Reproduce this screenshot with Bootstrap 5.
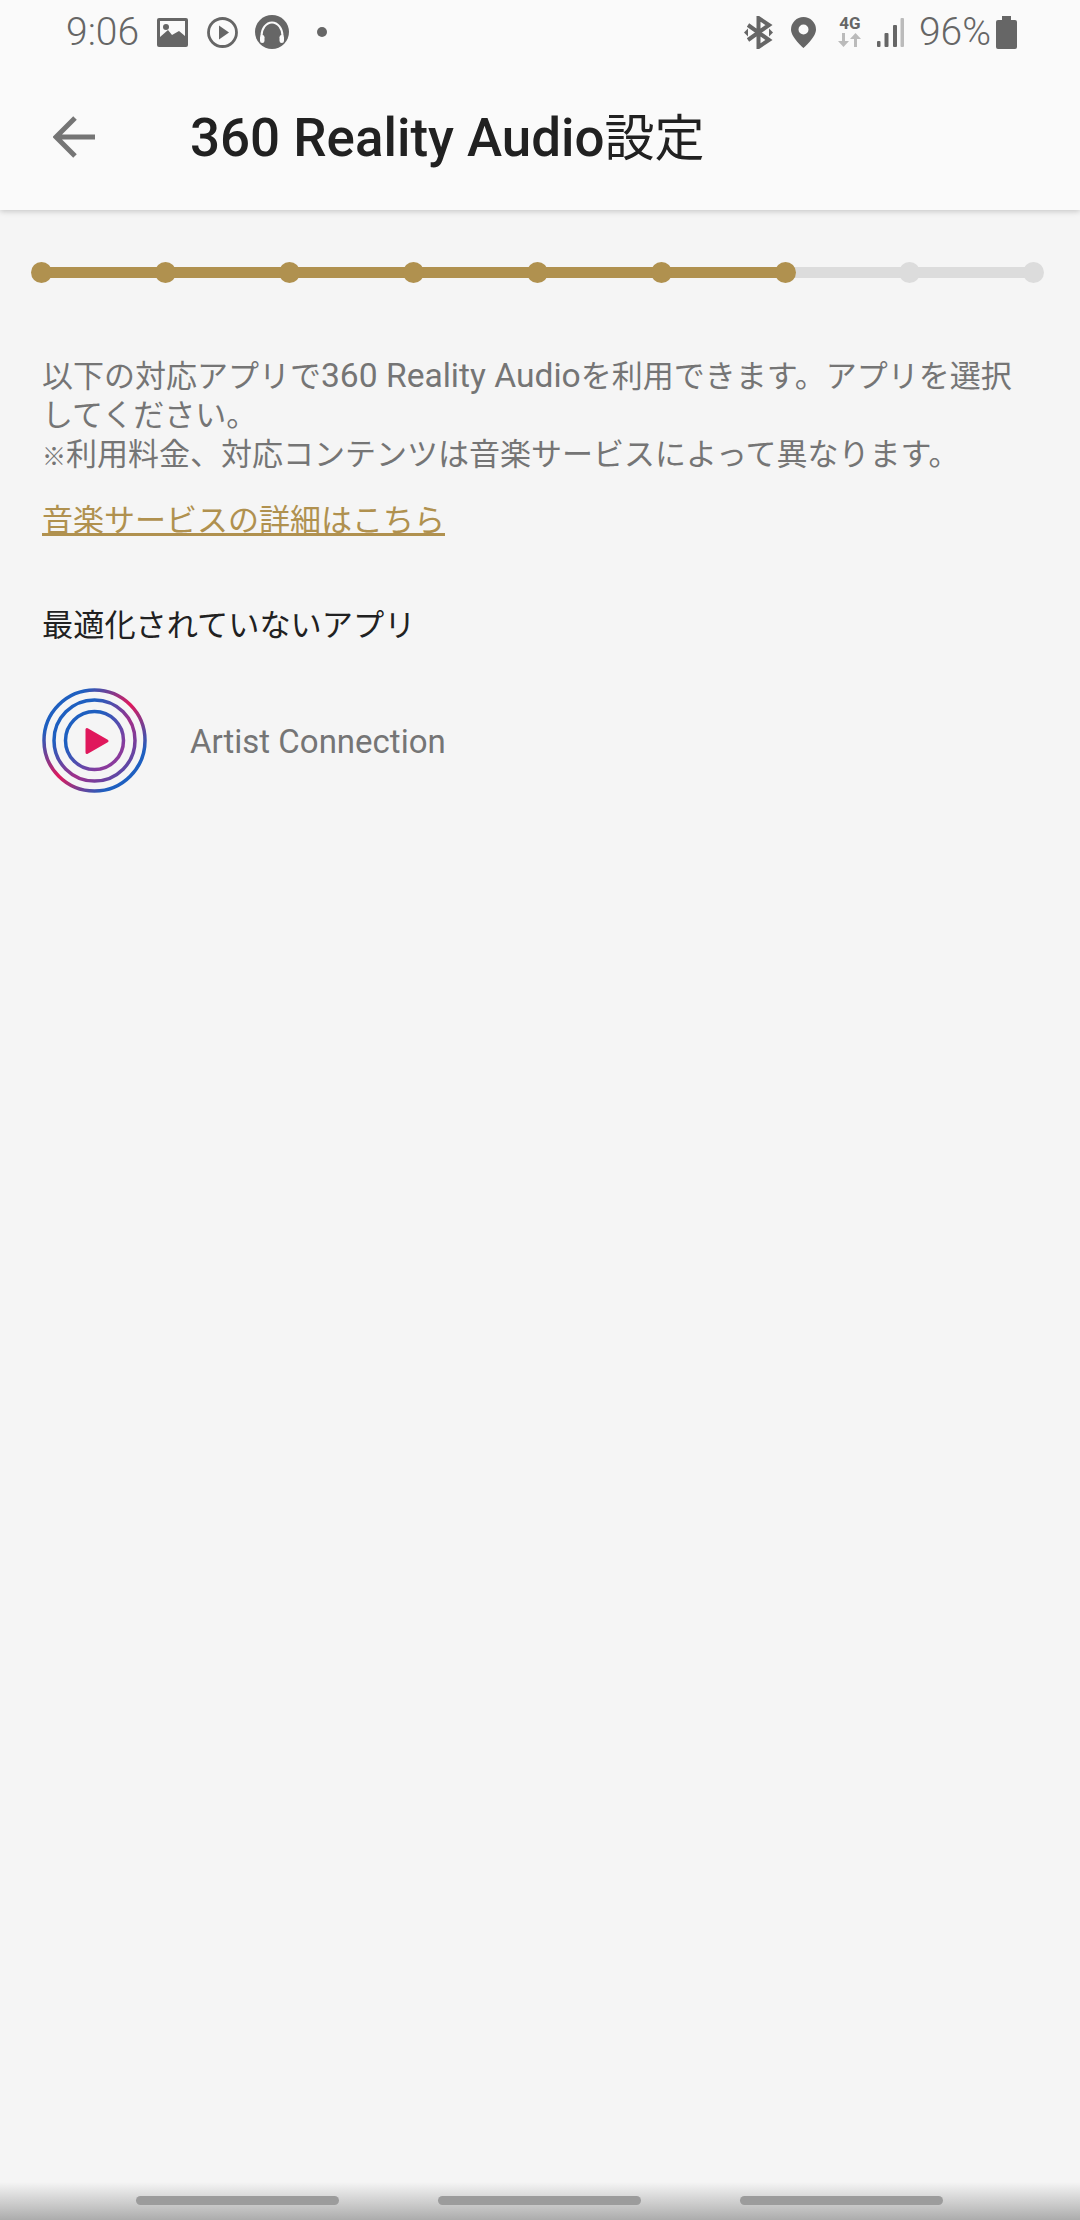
<!DOCTYPE html>
<html lang="ja">
<head>
<meta charset="utf-8">
<title>360 Reality Audio設定</title>
<link href="https://cdn.jsdelivr.net/npm/bootstrap@5.3.0/dist/css/bootstrap.min.css" rel="stylesheet">
<style>
html,body{height:100%;}
body{background:#f5f5f5;font-family:Roboto,"Noto Sans CJK JP",sans-serif;color:#757575;}
.screen{width:1080px;height:2220px;}
.topbar{height:210px;background:#fafafa;box-shadow:0 1px 6px rgba(0,0,0,.22);z-index:2;}
.status{height:64px;padding:0 63px 0 66px;color:#666;font-size:39px;font-weight:300;line-height:1;}
.status svg{display:block;flex:none;}
.gap-a{margin-left:18px;}
.gap-a2{margin-left:19px;}
.gap-b{margin-left:17px;}
.gap-c{margin-left:28px;}
.gap-d{margin-left:22px;}
.gap-e{margin-left:15px;}
.gap-f{margin-left:15px;}
.gap-g{margin-left:5px;}
.title-row{height:146px;padding:0 0 0 53px;}
.back-ico{margin-right:95px;}
.app-title{font-size:50px;font-weight:500;color:#212121;line-height:1;margin:0;position:relative;top:1px;}
.app-title .ltn{font-size:52.9px;}
.app-title .cjk{font-weight:400;}
.stepper{margin:52px 36px 0 31px;height:21px;}
.dot{width:21px;height:21px;border-radius:50%;flex:none;position:relative;z-index:1;}
.seg{height:11px;flex:1 1 0;margin:0 -4px;}
.on{background:#b0914f;}
.off{background:#dcdcdc;}
.intro{margin:73px 30px 0 42px;font-size:31px;line-height:39px;}
.ltn{font-size:33.6px;}
.kome{font-size:24px;line-height:1;font-weight:500;}
.more{display:block;margin:27px 0 0 42px;font-size:31px;line-height:39px;color:#b0914f;}
.more:hover{color:#b0914f;}
.sect{margin:66px 0 0 42px;font-size:31.2px;line-height:39px;color:#212121;font-weight:400;}
.app-row{margin:43px 0 0 42px;}
.app-name{margin-left:43px;font-size:33px;line-height:39px;position:relative;top:1px;}
.navfade{height:38px;background:linear-gradient(#f5f5f5,#acacac);padding:14px 1px 0 0;gap:99px;}
.pill{width:203px;height:9px;border-radius:5px;background:#9c9c9c;}
</style>
</head>
<body class="m-0">
<div class="screen d-flex flex-column overflow-hidden">
  <header class="topbar position-relative">
    <div class="status d-flex align-items-center">
      <span>9:06</span>
      <svg class="gap-a" width="31" height="29" viewBox="0 0 31 29"><rect width="31" height="29" rx="2" fill="#666"/><path d="M3 3H28V18L22 13L15 17L11 12L3 19Z" fill="#fafafa"/><circle cx="9" cy="9" r="3" fill="#666"/></svg>
      <svg class="gap-a2" width="31" height="31" viewBox="0 0 31 31"><circle cx="15.500" cy="15.500" r="14" fill="none" stroke="#666" stroke-width="2.800"/><path d="M12 8.500v14l10-7z" fill="#666"/></svg>
      <svg class="gap-b" width="34" height="34" viewBox="0 0 34 34"><circle cx="17" cy="17" r="17" fill="#666"/><path d="M6.500 21a10.500 13.500 0 0 1 21 0" fill="none" stroke="#fafafa" stroke-width="2"/><rect x="5" y="20" width="4.500" height="8" rx="2.200" fill="#fafafa"/><rect x="24.500" y="20" width="4.500" height="8" rx="2.200" fill="#fafafa"/></svg>
      <svg class="gap-c" width="10" height="10" viewBox="0 0 10 10"><circle cx="5" cy="5" r="5" fill="#666"/></svg>
      <span class="ms-auto"></span>
      <svg width="29" height="33" viewBox="0 0 29 33"><path d="M4 9l21 15-10.500 7V2L25 9 4 24" fill="none" stroke="#666" stroke-width="4"/><path d="M0 16.500l4-4v8zM29 16.500l-4-4v8z" fill="#666"/></svg>
      <svg class="gap-a" width="25" height="31" viewBox="0 0 25 31"><path fill-rule="evenodd" d="M12.500 0A12.500 12.500 0 0 0 0 12.500C0 20.500 12.500 31 12.500 31S25 20.500 25 12.500A12.500 12.500 0 0 0 12.500 0zm0 7.500a5 5 0 1 1 0 10 5 5 0 0 1 0-10z" fill="#666"/></svg>
      <svg class="gap-d" width="24" height="38" viewBox="0 -3 24 38"><text x="12" y="13" text-anchor="middle" font-family="Roboto" font-weight="700" font-size="17" fill="#666">4G</text><path d="M4 17h3v8h4l-5.500 6L0 25h4zM16 31h3v-8h4l-5.500-6-5.500 6h4z" fill="#bbb"/></svg>
      <svg class="gap-e" width="27" height="29" viewBox="0 0 27 29"><rect y="23" width="3.500" height="6" rx="1" fill="#666"/><rect x="7.500" y="15" width="4" height="14" rx="1" fill="#666"/><rect x="16" y="7" width="4" height="22" rx="1" fill="#666"/><rect x="23.500" y="0" width="3.500" height="29" rx="1" fill="#bbb"/></svg>
      <span class="gap-f">96%</span>
      <svg class="gap-g" width="21" height="33" viewBox="0 0 21 33"><path d="M6 0h9v4h4a2 2 0 0 1 2 2v25a2 2 0 0 1-2 2H2a2 2 0 0 1-2-2V6a2 2 0 0 1 2-2h4z" fill="#666"/></svg>
    </div>
    <div class="title-row d-flex align-items-center">
      <svg class="back-ico" width="42" height="42" viewBox="0 0 42 42"><path d="M42 21H4M22 2L3 21l19 19" fill="none" stroke="#757575" stroke-width="5"/></svg>
      <h1 class="app-title"><span class="ltn">360 Reality Audio</span><span class="cjk">設定</span></h1>
    </div>
  </header>
  <main class="flex-grow-1">
    <div class="stepper d-flex align-items-center">
      <i class="dot on"></i><i class="seg on"></i><i class="dot on"></i><i class="seg on"></i><i class="dot on"></i><i class="seg on"></i><i class="dot on"></i><i class="seg on"></i><i class="dot on"></i><i class="seg on"></i><i class="dot on"></i><i class="seg on"></i><i class="dot on"></i><i class="seg off"></i><i class="dot off"></i><i class="seg off"></i><i class="dot off"></i>
    </div>
    <p class="intro mb-0">以下の対応アプリで<span class="ltn">360 Reality Audio</span>を利用できます。アプリを選択<br>してください。<br><span class="kome">※</span>利用料金、対応コンテンツは音楽サービスによって異なります。</p>
    <a class="more" href="#">音楽サービスの詳細はこちら</a>
    <h2 class="sect mb-0">最適化されていないアプリ</h2>
    <div class="app-row d-flex align-items-center">
      <svg width="105" height="105" viewBox="0 0 105 105">
        <defs>
          <linearGradient id="g1" x1="0" y1="0" x2="1" y2="1"><stop offset=".2" stop-color="#1e5fc0"/><stop offset=".5" stop-color="#e0185c"/><stop offset=".8" stop-color="#1e5fc0"/></linearGradient>
          <linearGradient id="g2" x1="0" y1="0" x2="1" y2="1"><stop offset=".25" stop-color="#1e5fc0"/><stop offset=".6" stop-color="#a02f8a"/><stop offset="1" stop-color="#3a55b5"/></linearGradient>
          <linearGradient id="g3" x1="0" y1="0" x2="1" y2="1"><stop offset=".3" stop-color="#1e5fc0"/><stop offset=".8" stop-color="#8a3a9c"/></linearGradient>
        </defs>
        <circle cx="52.500" cy="52.500" r="50.500" fill="none" stroke="url(#g1)" stroke-width="3.500"/>
        <circle cx="52.500" cy="52.500" r="40.500" fill="none" stroke="url(#g2)" stroke-width="3.500"/>
        <circle cx="52.500" cy="52.500" r="29" fill="none" stroke="url(#g3)" stroke-width="3.500"/>
        <path d="M45 41.500v23l20-11.500z" fill="#e0185c" stroke="#e0185c" stroke-width="3" stroke-linejoin="round"/>
      </svg>
      <span class="app-name">Artist Connection</span>
    </div>
  </main>
  <div class="navfade d-flex justify-content-center"><i class="pill"></i><i class="pill"></i><i class="pill"></i></div>
</div>
<script src="https://cdn.jsdelivr.net/npm/bootstrap@5.3.0/dist/js/bootstrap.bundle.min.js"></script>
</body>
</html>
